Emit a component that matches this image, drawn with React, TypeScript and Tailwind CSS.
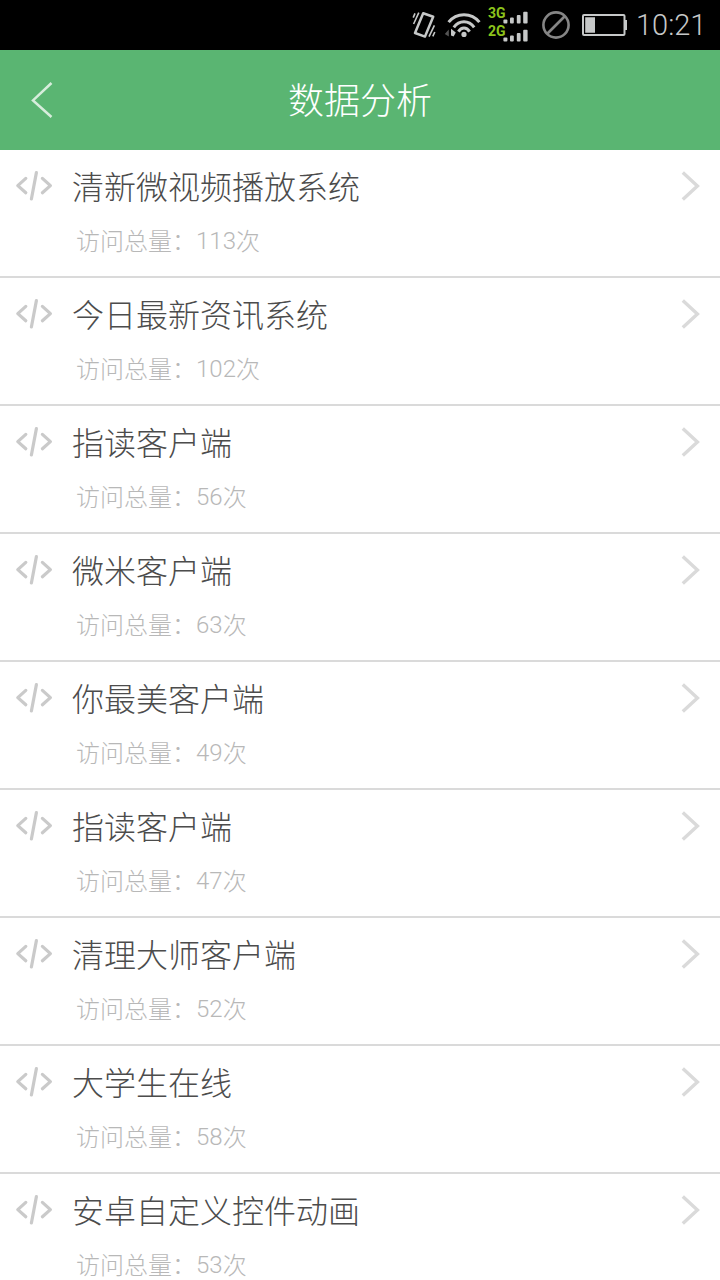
import type { SVGProps } from 'react'

const items = [
  { name: '清新微视频播放系统', visits: 113 },
  { name: '今日最新资讯系统', visits: 102 },
  { name: '指读客户端', visits: 56 },
  { name: '微米客户端', visits: 63 },
  { name: '你最美客户端', visits: 49 },
  { name: '指读客户端', visits: 47 },
  { name: '清理大师客户端', visits: 52 },
  { name: '大学生在线', visits: 58 },
  { name: '安卓自定义控件动画', visits: 53 },
]

function Icon(props: SVGProps<SVGSVGElement>) {
  return <svg fill="none" stroke="currentColor" aria-hidden="true" {...props} />
}

function VibrateIcon() {
  return (
    <Icon viewBox="0 0 24 30" width="24" height="30" strokeWidth="2.5" strokeLinejoin="round">
      <path d="M11.2 3.2L21.2 6.8L13 26.6L3 23Z" />
      <path d="M1.2 7.6L3 3.4M1.6 14L6.8 2.6M17 26.6L22.4 15.4M20.8 26.4L22.8 22" strokeWidth="1.6" />
    </Icon>
  )
}

function WifiIcon() {
  return (
    <Icon viewBox="0 0 38 30" width="38" height="30" strokeWidth="3">
      <path d="M4.6 12.2C12.4 2.2 27.6 2.2 35.4 12.2" />
      <path d="M9.8 17.4C15.2 10 24.8 10 30.2 17.4" />
      <path d="M14.4 21.6C17.4 16.8 22.6 16.8 25.6 21.6" />
      <circle cx="20" cy="24.4" r="2.6" fill="currentColor" stroke="none" />
      <path d="M4.8 19.4V26.6L0.8 23.9Z" fill="#555" stroke="none" />
      <path d="M7 18.8L11.8 22.4L9.6 26.6L7 25.4Z" fill="currentColor" stroke="none" />
    </Icon>
  )
}

function Signal({ label }: { label: string }) {
  return (
    <div className="flex h-[18px] items-start">
      <span className="-mt-px w-[15px] whitespace-nowrap font-['Roboto',sans-serif] text-sm font-bold leading-[14px] text-[#8cc41c]">
        {label}
      </span>
      <Icon viewBox="0 0 25 17" width="25" height="17" fill="currentColor" stroke="none">
        <rect x="0.4" y="12.6" width="4" height="4" rx="1" />
        <rect x="7" y="10.6" width="3.8" height="6" rx="1" />
        <rect x="13.8" y="8" width="3.8" height="8.6" rx="1" />
        <rect x="20.2" y="4.8" width="4.4" height="11.8" rx="1" />
      </Icon>
    </div>
  )
}

function BanIcon() {
  return (
    <Icon viewBox="0 0 28 28" width="28" height="28" strokeWidth="2.6" className="text-[#858585]">
      <circle cx="14" cy="14" r="12.6" />
      <path d="M5 23L23 5" />
    </Icon>
  )
}

function BatteryIcon() {
  return (
    <Icon viewBox="0 0 45 22" width="45" height="22" strokeWidth="2">
      <rect x="1" y="1" width="41.5" height="20" rx="1" />
      <path d="M3.2 3.2H13V18.8H3.2ZM42.5 6H45V16H42.5Z" fill="currentColor" stroke="none" />
    </Icon>
  )
}

function StatusBar() {
  return (
    <div className="flex h-[50px] shrink-0 items-center justify-end bg-black pr-[14px] text-[#c6c8c8]">
      <VibrateIcon />
      <div className="ml-2">
        <WifiIcon />
      </div>
      <div className="-mt-px ml-[6px]">
        <Signal label="3G" />
        <Signal label="2G" />
      </div>
      <div className="ml-[14px]">
        <BanIcon />
      </div>
      <div className="ml-3">
        <BatteryIcon />
      </div>
      <span className="ml-[9px] mt-[2px] w-[70px] whitespace-nowrap font-['Roboto',sans-serif] text-[29px] font-light">
        10:21
      </span>
    </div>
  )
}

function Header() {
  return (
    <header className="grid h-[100px] shrink-0 grid-cols-[100px_1fr_100px] items-center bg-[#5ab572] text-white">
      <Icon viewBox="0 0 100 100" width="100" height="100" strokeWidth="2.5" className="text-[#d7eddc]">
        <path d="M51.5 33L33 50.4L51.5 67" />
      </Icon>
      <h1 className="-mt-1 text-center text-4xl leading-none">数据分析</h1>
    </header>
  )
}

function Row({ name, visits }: { name: string; visits: number }) {
  return (
    <li className="flex h-32 border-b-2 border-[#dadada]">
      <div className="w-[72px] pl-[15px] pt-5">
        <Icon
          viewBox="0 0 38 32"
          width="38"
          height="32"
          strokeWidth="3.2"
          strokeLinecap="round"
          strokeLinejoin="round"
          className="text-[#cacaca]"
        >
          <path d="M10.8 8.4L2.8 15.6L10.8 22.8M27.4 8.4L35.4 15.6L27.4 22.8M21.4 2.6L16.4 29" />
        </Icon>
      </div>
      <div className="flex-1">
        <h2 className="mt-3 text-[32px] leading-[46px] text-[#4c4c4c]">{name}</h2>
        <p className="ml-1 mt-5 text-2xl leading-6 text-[#b8b8b8]">
          访问总量：<span className="relative -top-px font-['Roboto',sans-serif]">{visits}</span>次
        </p>
      </div>
      <div className="pr-5 pt-5">
        <Icon viewBox="0 0 20 32" width="20" height="32" strokeWidth="3.4" className="text-[#dadada]">
          <path d="M2.8 2.6L17.4 16L2.8 29.4" />
        </Icon>
      </div>
    </li>
  )
}

export default function App() {
  return (
    <div className="flex h-[1280px] flex-col overflow-hidden bg-white font-['Noto_Sans_CJK_SC',sans-serif] font-light">
      <StatusBar />
      <Header />
      <ul>
        {items.map((item, i) => (
          <Row key={i} name={item.name} visits={item.visits} />
        ))}
      </ul>
    </div>
  )
}
